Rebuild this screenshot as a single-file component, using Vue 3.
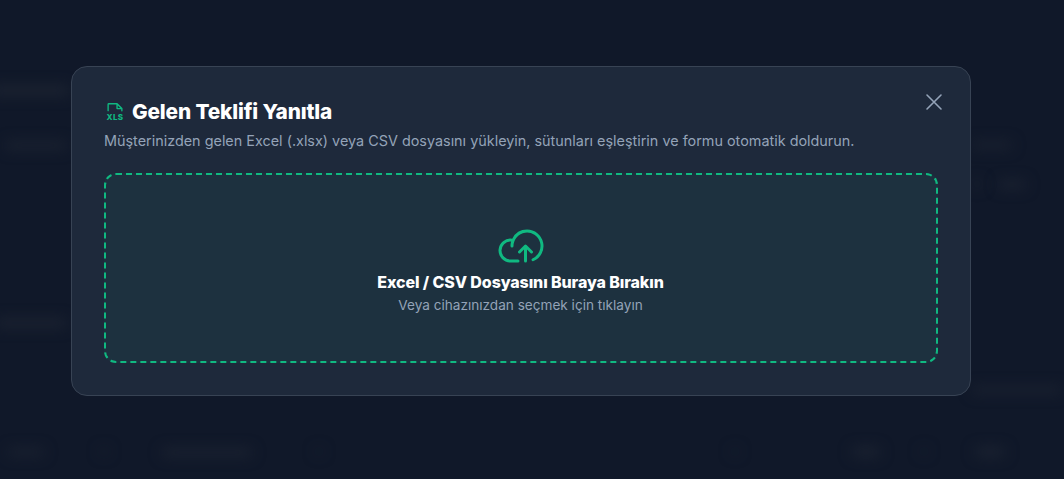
<script setup>
// blurred page content showing behind the modal backdrop
const blobs = [
  { x: -10, y: 86, w: 80, h: 9 },
  { x: 5, y: 142, w: 62, h: 7 },
  { x: -5, y: 319, w: 72, h: 8 },
  { x: 8, y: 449, w: 36, h: 6 },
  { x: 100, y: 449, w: 8, h: 5 },
  { x: 162, y: 449, w: 90, h: 7 },
  { x: 316, y: 449, w: 6, h: 5 },
  { x: 732, y: 449, w: 6, h: 5 },
  { x: 852, y: 448, w: 28, h: 8 },
  { x: 921, y: 449, w: 6, h: 5 },
  { x: 975, y: 448, w: 30, h: 8 },
  { x: 972, y: 387, w: 90, h: 6 },
  { x: 972, y: 142, w: 40, h: 6 },
  { x: 972, y: 181, w: 10, h: 6 },
  { x: 998, y: 181, w: 28, h: 7 },
]

const blobStyle = (b) => ({
  left: b.x + 'px',
  top: b.y + 'px',
  width: b.w + 'px',
  height: b.h + 'px',
})
</script>

<template>
  <div class="screen">
    <div class="backdrop">
      <span v-for="(b, i) in blobs" :key="i" class="blob" :style="blobStyle(b)"></span>
    </div>

    <div class="modal">
      <button class="close" aria-label="Kapat">
        <svg width="20" height="20" viewBox="0 0 20 20" fill="none" stroke="currentColor" stroke-width="1.6" stroke-linecap="round">
          <path d="M3 3 17 17M17 3 3 17" />
        </svg>
      </button>

      <div class="title-row">
        <svg class="file-icon" width="22" height="22" viewBox="0 0 22 22">
          <path
            fill="currentColor"
            d="M3.44 9.63V3.44A1.38 1.38 0 0 1 4.81 2.06h8.25a.69.69 0 0 1 .49.2l4.81 4.81a.69.69 0 0 1 .2.49v2.07a.69.69 0 1 1-1.37 0V8.25h-4.13a.69.69 0 0 1-.69-.69V3.44H4.81v6.19a.69.69 0 0 1-1.37 0ZM13.75 6.88h2.46l-2.46-2.47Z"
          />
          <text x="11" y="18.6" text-anchor="middle" class="file-label">XLS</text>
        </svg>
        <h2 class="title">Gelen Teklifi Yanıtla</h2>
      </div>
      <p class="subtitle">Müşterinizden gelen Excel (.xlsx) veya CSV dosyasını yükleyin, sütunları eşleştirin ve formu otomatik doldurun.</p>

      <div class="dropzone">
        <svg class="cloud" width="48" height="48" viewBox="0 0 256 256">
          <path
            fill="currentColor"
            d="M178.34,165.66,160,147.31V208a8,8,0,0,1-16,0V147.31l-18.34,18.35a8,8,0,0,1-11.32-11.32l32-32a8,8,0,0,1,11.32,0l32,32a8,8,0,0,1-11.32,11.32ZM160,40A88.08,88.08,0,0,0,81.29,88.68,64,64,0,1,0,72,216h40a8,8,0,0,0,0-16H72a48,48,0,0,1,0-96c1.1,0,2.2,0,3.29.12A88,88,0,0,0,72,128a8,8,0,0,0,16,0,72,72,0,1,1,100.8,66,8,8,0,0,0,3.2,15.34,7.9,7.9,0,0,0,3.2-.68A88,88,0,0,0,160,40Z"
          />
        </svg>
        <div class="drop-title">Excel / CSV Dosyasını Buraya Bırakın</div>
        <div class="drop-hint">Veya cihazınızdan seçmek için tıklayın</div>
      </div>
    </div>
  </div>
</template>

<style scoped>
.screen {
  position: relative;
  box-sizing: border-box;
  width: 1064px;
  height: 479px;
  padding: 0 22px 17px 0;
  display: flex;
  align-items: center;
  justify-content: center;
  overflow: hidden;
  background: #101829;
  font-family: Inter, "Liberation Sans", sans-serif;
}

.backdrop {
  position: absolute;
  inset: 0;
  background: #101829;
}

.blob {
  position: absolute;
  background: #1e2533;
  border-radius: 4px;
  filter: blur(7px);
}

.modal {
  position: relative;
  box-sizing: border-box;
  width: 900px;
  height: 330px;
  flex-shrink: 0;
  padding: 32px;
  background: #1e293b;
  border: 1px solid #384354;
  border-radius: 16px;
  display: flex;
  flex-direction: column;
}

.close {
  position: absolute;
  top: 25px;
  right: 26px;
  width: 20px;
  height: 20px;
  padding: 0;
  border: none;
  background: none;
  color: #94a3b8;
  cursor: pointer;
}

.title-row {
  display: flex;
  align-items: center;
  gap: 6px;
}

.file-icon {
  color: #10b981;
  flex-shrink: 0;
}

.file-label {
  font-family: Inter, "Liberation Sans", sans-serif;
  font-size: 8px;
  font-weight: 800;
  letter-spacing: 0.4px;
  fill: currentColor;
}

.title {
  margin: 0;
  font-size: 20.8px;
  line-height: 26px;
  font-weight: 800;
  letter-spacing: -0.15px;
  color: #fff;
}

.subtitle {
  margin: 5px 0 22px;
  font-size: 14.4px;
  line-height: 21px;
  color: #94a3b8;
}

.dropzone {
  box-sizing: border-box;
  height: 190px;
  border: 2px dashed #10b981;
  border-radius: 12px;
  background: rgba(16, 185, 129, 0.06);
  display: flex;
  flex-direction: column;
  align-items: center;
  justify-content: center;
  cursor: pointer;
}

.cloud {
  color: #10b981;
  margin-left: -1px;
}

.drop-title {
  margin-top: 2px;
  margin-left: -1px;
  font-size: 16px;
  line-height: 20px;
  font-weight: 800;
  letter-spacing: -0.1px;
  color: #fff;
}

.drop-hint {
  margin-top: 4px;
  margin-left: -1px;
  font-size: 13.6px;
  line-height: 18px;
  color: #94a3b8;
}
</style>
